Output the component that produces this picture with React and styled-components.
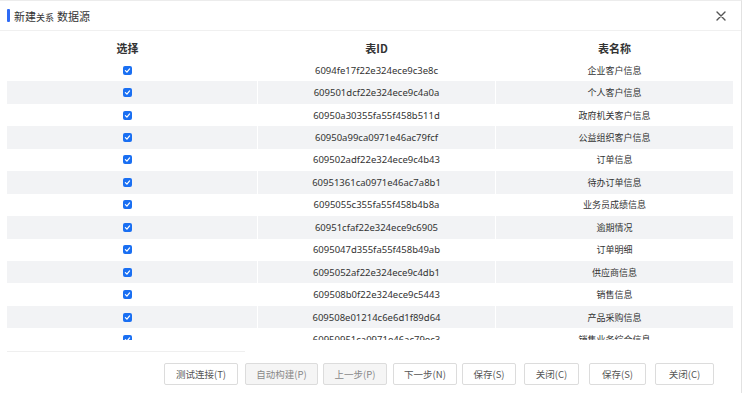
import React from 'react';
import styled, { createGlobalStyle } from 'styled-components';

const GlobalStyle = createGlobalStyle`
  html, body {
    margin: 0;
    padding: 0;
    background: #fff;
  }
  body {
    font-family: "Noto Sans", "Noto Sans CJK SC", sans-serif;
    color: #333;
  }
`

const Dialog = styled.div`
  width: 741px;
  height: 392px;
  border-top: 1px solid #ececec;
  border-right: 1px solid #e2e2e2;
  background: #fff;
  display: flex;
  flex-direction: column;
  overflow: hidden;
`

const Header = styled.div`
  height: 29px;
  flex-shrink: 0;
  display: flex;
  align-items: center;
  padding: 0 14px 0 7px;
  border-bottom: 1px solid #f0f0f0;
`

const TitleBar = styled.span`
  width: 3px;
  height: 13px;
  background: #2f6bf5;
  border-radius: 1px;
  margin-right: 4px;
`

const Title = styled.span`
  font-family: "Noto Sans CJK SC", sans-serif;
  font-size: 11px;
  color: #333;
  flex: 1;

  small {
    font-size: 9px;
    margin-right: 3px;
  }
`

const Close = styled.button`
  border: none;
  background: none;
  padding: 0;
  width: 12px;
  height: 12px;
  display: flex;
  align-items: center;
  justify-content: center;
  color: #555;
`

const TableWrap = styled.div`
  margin: 6px 8px 0 7px;
  display: flex;
  flex-direction: column;
`

const Grid = styled.div`
  display: grid;
  grid-template-columns: 250px 237px 1fr;
  column-gap: 1px;
`

const HeadCell = styled.div`
  height: 22px;
  display: flex;
  align-items: center;
  justify-content: center;
  font-family: "Noto Sans CJK SC", sans-serif;
  font-weight: 700;
  font-size: 11px;
  color: #333;
  padding-right: ${p => (p.$first ? '9px' : '0')};
`

const Body = styled.div`
  height: 281px;
  overflow: hidden;
`

const Cell = styled.div`
  height: 22.45px;
  display: flex;
  align-items: center;
  justify-content: center;
  background: ${p => (p.$striped ? '#f2f3f5' : '#fff')};
  font-family: ${p => (p.$mono ? '"Noto Sans", sans-serif' : '"Noto Sans CJK SC", sans-serif')};
  font-size: ${p => (p.$mono ? '9.5px' : '9px')};
  color: #333;
  padding-right: ${p => (p.$first ? '9px' : '0')};
  white-space: nowrap;
`

const Check = styled.span`
  width: 9px;
  height: 9px;
  border-radius: 2px;
  background: #1a6ff2;
  display: flex;
  align-items: center;
  justify-content: center;
`

const ScrollThumb = styled.div`
  margin: 11px 0 0 7px;
  width: 238px;
  height: 1px;
  background: #efefef;
`

const Footer = styled.div`
  display: flex;
  align-items: center;
  padding: 11px 0 0 0;
`

const Button = styled.button`
  height: 22px;
  width: ${p => p.$w}px;
  padding: 0;
  border: 1px solid #dcdcdc;
  border-radius: 2px;
  background: ${p => (p.$disabled ? '#f5f5f5' : '#fff')};
  color: ${p => (p.$disabled ? '#888' : '#555')};
  font-family: "Noto Sans CJK SC", sans-serif;
  font-size: 9.5px;
  margin-left: ${p => p.$gap}px;
  cursor: pointer;
`

const rows = [
  ['6094fe17f22e324ece9c3e8c', '企业客户信息'],
  ['609501dcf22e324ece9c4a0a', '个人客户信息'],
  ['60950a30355fa55f458b511d', '政府机关客户信息'],
  ['60950a99ca0971e46ac79fcf', '公益组织客户信息'],
  ['609502adf22e324ece9c4b43', '订单信息'],
  ['60951361ca0971e46ac7a8b1', '待办订单信息'],
  ['6095055c355fa55f458b4b8a', '业务员成绩信息'],
  ['60951cfaf22e324ece9c6905', '逾期情况'],
  ['6095047d355fa55f458b49ab', '订单明细'],
  ['6095052af22e324ece9c4db1', '供应商信息'],
  ['609508b0f22e324ece9c5443', '销售信息'],
  ['609508e01214c6e6d1f89d64', '产品采购信息'],
  ['60950951ca0971e46ac79ec3', '销售业务综合信息'],
]

const buttons = [
  { label: '测试连接(T)', w: 74, gap: 164 },
  { label: '自动构建(P)', w: 73, gap: 7, disabled: true },
  { label: '上一步(P)', w: 64, gap: 5, disabled: true },
  { label: '下一步(N)', w: 64, gap: 6 },
  { label: '保存(S)', w: 54, gap: 5 },
  { label: '关闭(C)', w: 55, gap: 8 },
  { label: '保存(S)', w: 57, gap: 10 },
  { label: '关闭(C)', w: 59, gap: 9 },
]

const CheckIcon = () => (
  <svg width="7" height="7" viewBox="0 0 10 10">
    <path d="M2 5.2 L4.2 7.3 L8 2.8" fill="none" stroke="#fff" strokeWidth="1.8" strokeLinecap="round" strokeLinejoin="round" />
  </svg>
)

const App = () => {
  return (
    <>
      <GlobalStyle />
      <Dialog>
        <Header>
          <TitleBar />
          <Title>新建<small>关系</small>数据源</Title>
          <Close>
            <svg width="10" height="10" viewBox="0 0 10 10">
              <path d="M1 1 L9 9 M9 1 L1 9" stroke="#555" strokeWidth="1.4" strokeLinecap="round" />
            </svg>
          </Close>
        </Header>
        <TableWrap>
          <Grid>
            <HeadCell $first>选择</HeadCell>
            <HeadCell>表ID</HeadCell>
            <HeadCell>表名称</HeadCell>
          </Grid>
          <Body>
            <Grid>
              {rows.map(([id, name], i) => (
                <React.Fragment key={id}>
                  <Cell $first $striped={i % 2 === 1}>
                    <Check><CheckIcon /></Check>
                  </Cell>
                  <Cell $mono $striped={i % 2 === 1}>{id}</Cell>
                  <Cell $striped={i % 2 === 1}>{name}</Cell>
                </React.Fragment>
              ))}
            </Grid>
          </Body>
        </TableWrap>
        <ScrollThumb />
        <Footer>
          {buttons.map((b, i) => (
            <Button key={i} $w={b.w} $gap={b.gap} $disabled={b.disabled}>{b.label}</Button>
          ))}
        </Footer>
      </Dialog>
    </>
  )
}

export default App;
